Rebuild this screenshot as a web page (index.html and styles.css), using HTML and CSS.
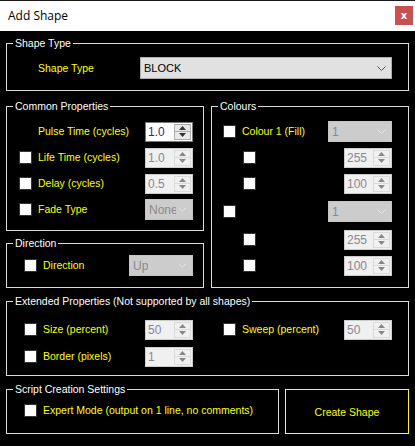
FILE: index.html
```html
<!DOCTYPE html>
<html>
<head>
<meta charset="utf-8">
<title>Add Shape</title>
<link rel="stylesheet" href="styles.css">
</head>
<body>
<div class="window">
  <div class="titlebar">
    <span class="title">Add Shape</span>
    <span class="close">x</span>
  </div>
  <div class="content">
    <section class="group g-shape">
      <span class="legend">Shape Type</span>
      <div class="shape-row">
        <span class="label">Shape Type</span>
        <div class="combo enabled wide"><span class="ctext">BLOCK</span><svg class="chev" width="9" height="5" viewBox="0 0 9 5"><path d="M0.5 0.5 L4.5 4.5 L8.5 0.5" fill="none" stroke="#555" stroke-width="1"/></svg></div>
      </div>
    </section>

    <div class="columns">
      <div class="col-left">
        <section class="group g-common">
          <span class="legend">Common Properties</span>
          <div class="rows">
            <div class="row r-common">
              <span></span><span></span><span></span>
              <span class="label">Pulse Time (cycles)</span>
              <div class="num enabled"><span class="ntext">1.0</span><span class="spin"><span class="up"><svg width="7" height="4" viewBox="0 0 7 4"><path d="M3.5 0 L7 4 L0 4 Z" fill="#333"/></svg></span><span class="down"><svg width="7" height="4" viewBox="0 0 7 4"><path d="M0 0 L7 0 L3.5 4 Z" fill="#333"/></svg></span></span></div>
            </div>
            <div class="row r-common">
              <span></span><span class="cb"></span><span></span>
              <span class="label">Life Time (cycles)</span>
              <div class="num"><span class="ntext">1.0</span><span class="spin"><span class="up"><svg width="7" height="4" viewBox="0 0 7 4"><path d="M3.5 0 L7 4 L0 4 Z" fill="#888"/></svg></span><span class="down"><svg width="7" height="4" viewBox="0 0 7 4"><path d="M0 0 L7 0 L3.5 4 Z" fill="#888"/></svg></span></span></div>
            </div>
            <div class="row r-common">
              <span></span><span class="cb"></span><span></span>
              <span class="label">Delay (cycles)</span>
              <div class="num"><span class="ntext">0.5</span><span class="spin"><span class="up"><svg width="7" height="4" viewBox="0 0 7 4"><path d="M3.5 0 L7 4 L0 4 Z" fill="#888"/></svg></span><span class="down"><svg width="7" height="4" viewBox="0 0 7 4"><path d="M0 0 L7 0 L3.5 4 Z" fill="#888"/></svg></span></span></div>
            </div>
            <div class="row r-common">
              <span></span><span class="cb"></span><span></span>
              <span class="label">Fade Type</span>
              <div class="combo"><span class="ctext">None</span><svg class="chev" width="9" height="5" viewBox="0 0 9 5"><path d="M0.5 0.5 L4.5 4.5 L8.5 0.5" fill="none" stroke="#e8e8e8" stroke-width="1"/></svg></div>
            </div>
          </div>
        </section>

        <section class="group g-dir">
          <span class="legend">Direction</span>
          <div class="rows">
            <div class="row r-dir">
              <span></span><span class="cb"></span><span></span>
              <span class="label">Direction</span>
              <div class="combo"><span class="ctext">Up</span><svg class="chev" width="9" height="5" viewBox="0 0 9 5"><path d="M0.5 0.5 L4.5 4.5 L8.5 0.5" fill="none" stroke="#e8e8e8" stroke-width="1"/></svg></div>
            </div>
          </div>
        </section>
      </div>

      <section class="group g-colours">
        <span class="legend">Colours</span>
        <div class="rows rows-col">
          <div class="row r-col">
            <span class="cb c-cb"></span>
            <span class="label c-label">Colour 1 (Fill)</span>
            <div class="combo c-combo"><span class="ctext">1</span><svg class="chev" width="9" height="5" viewBox="0 0 9 5"><path d="M0.5 0.5 L4.5 4.5 L8.5 0.5" fill="none" stroke="#e8e8e8" stroke-width="1"/></svg></div>
          </div>
          <div class="row r-col">
            <span class="cb c-sub"></span>
            <div class="num c-num"><span class="ntext">255</span><span class="spin"><span class="up"><svg width="7" height="4" viewBox="0 0 7 4"><path d="M3.5 0 L7 4 L0 4 Z" fill="#888"/></svg></span><span class="down"><svg width="7" height="4" viewBox="0 0 7 4"><path d="M0 0 L7 0 L3.5 4 Z" fill="#888"/></svg></span></span></div>
          </div>
          <div class="row r-col">
            <span class="cb c-sub"></span>
            <div class="num c-num"><span class="ntext">100</span><span class="spin"><span class="up"><svg width="7" height="4" viewBox="0 0 7 4"><path d="M3.5 0 L7 4 L0 4 Z" fill="#888"/></svg></span><span class="down"><svg width="7" height="4" viewBox="0 0 7 4"><path d="M0 0 L7 0 L3.5 4 Z" fill="#888"/></svg></span></span></div>
          </div>
          <div class="row r-col r-gap">
            <span class="cb c-cb"></span>
            <div class="combo c-combo"><span class="ctext">1</span><svg class="chev" width="9" height="5" viewBox="0 0 9 5"><path d="M0.5 0.5 L4.5 4.5 L8.5 0.5" fill="none" stroke="#e8e8e8" stroke-width="1"/></svg></div>
          </div>
          <div class="row r-col r-gap">
            <span class="cb c-sub"></span>
            <div class="num c-num"><span class="ntext">255</span><span class="spin"><span class="up"><svg width="7" height="4" viewBox="0 0 7 4"><path d="M3.5 0 L7 4 L0 4 Z" fill="#888"/></svg></span><span class="down"><svg width="7" height="4" viewBox="0 0 7 4"><path d="M0 0 L7 0 L3.5 4 Z" fill="#888"/></svg></span></span></div>
          </div>
          <div class="row r-col">
            <span class="cb c-sub"></span>
            <div class="num c-num"><span class="ntext">100</span><span class="spin"><span class="up"><svg width="7" height="4" viewBox="0 0 7 4"><path d="M3.5 0 L7 4 L0 4 Z" fill="#888"/></svg></span><span class="down"><svg width="7" height="4" viewBox="0 0 7 4"><path d="M0 0 L7 0 L3.5 4 Z" fill="#888"/></svg></span></span></div>
          </div>
        </div>
      </section>
    </div>

    <section class="group g-ext">
      <span class="legend">Extended Properties (Not supported by all shapes)</span>
      <div class="rows rows-ext">
        <div class="row r-ext">
          <span></span><span class="cb"></span><span></span>
          <span class="label">Size (percent)</span>
          <div class="num"><span class="ntext">50</span><span class="spin"><span class="up"><svg width="7" height="4" viewBox="0 0 7 4"><path d="M3.5 0 L7 4 L0 4 Z" fill="#888"/></svg></span><span class="down"><svg width="7" height="4" viewBox="0 0 7 4"><path d="M0 0 L7 0 L3.5 4 Z" fill="#888"/></svg></span></span></div>
          <span></span><span class="cb"></span><span></span>
          <span class="label">Sweep (percent)</span>
          <div class="num"><span class="ntext">50</span><span class="spin"><span class="up"><svg width="7" height="4" viewBox="0 0 7 4"><path d="M3.5 0 L7 4 L0 4 Z" fill="#888"/></svg></span><span class="down"><svg width="7" height="4" viewBox="0 0 7 4"><path d="M0 0 L7 0 L3.5 4 Z" fill="#888"/></svg></span></span></div>
        </div>
        <div class="row r-ext">
          <span></span><span class="cb"></span><span></span>
          <span class="label">Border (pixels)</span>
          <div class="num"><span class="ntext">1</span><span class="spin"><span class="up"><svg width="7" height="4" viewBox="0 0 7 4"><path d="M3.5 0 L7 4 L0 4 Z" fill="#888"/></svg></span><span class="down"><svg width="7" height="4" viewBox="0 0 7 4"><path d="M0 0 L7 0 L3.5 4 Z" fill="#888"/></svg></span></span></div>
        </div>
      </div>
    </section>

    <div class="bottom">
      <section class="group g-script">
        <span class="legend">Script Creation Settings</span>
        <div class="rows rows-script">
          <div class="row r-script">
            <span></span><span class="cb"></span><span></span>
            <span class="label">Expert Mode (output on 1 line, no comments)</span>
          </div>
        </div>
      </section>
      <div class="create">Create Shape</div>
    </div>
  </div>
</div>
</body>
</html>
```

FILE: styles.css
```css
* { box-sizing: border-box; }

html, body {
  margin: 0;
  padding: 0;
  background: #000;
}

body {
  width: 415px;
  height: 446px;
  overflow: hidden;
  font-family: "Liberation Sans", Arial, sans-serif;
  font-size: 10.5px;
}

.window {
  width: 415px;
  height: 446px;
  background: #000;
}

.titlebar {
  height: 31px;
  border-top: 1px solid #1a1a1a;
  background: #fff;
  display: flex;
  align-items: center;
  justify-content: space-between;
  padding: 0 2px 0 8px;
}

.title {
  font-family: "Open Sans", "Noto Sans", sans-serif;
  font-size: 12px;
  color: #000;
  margin-top: -1px;
}

.close {
  width: 18px;
  height: 19px;
  background: #c75050;
  color: #fff;
  font-family: "DejaVu Sans", sans-serif;
  font-weight: bold;
  font-size: 10px;
  display: flex;
  align-items: center;
  justify-content: center;
  margin-top: -2px;
}

.content {
  padding: 0 6px;
}

.group {
  position: relative;
  border: 1px solid #dcdcdc;
}

.legend {
  position: absolute;
  top: -7px;
  left: 6px;
  padding: 0 2px;
  background: #000;
  color: #fff;
  line-height: 13px;
  white-space: nowrap;
}

.label {
  color: #ffff00;
  white-space: nowrap;
  line-height: 13px;
}

/* Shape type */
.g-shape {
  margin-top: 12px;
  height: 48px;
}

.shape-row {
  display: flex;
  align-items: center;
  padding: 13px 0 0 31px;
}

.shape-row .label {
  width: 102px;
}

/* layout columns */
.columns {
  display: flex;
  gap: 7px;
  margin-top: 15px;
}

.col-left {
  width: 198px;
  display: flex;
  flex-direction: column;
  gap: 12px;
}

.g-common { height: 125px; }
.g-dir { height: 45px; }
.g-colours { width: 198px; height: 182px; }

.g-ext {
  margin-top: 13px;
  height: 75px;
}

.bottom {
  display: flex;
  gap: 6px;
  margin-top: 13px;
}

.g-script {
  width: 273px;
  height: 45px;
}

.create {
  width: 124px;
  height: 45px;
  border: 1px solid #ffff00;
  color: #ffff00;
  display: flex;
  align-items: center;
  justify-content: center;
}

/* rows */
.rows {
  display: flex;
  flex-direction: column;
  gap: 5px;
  padding-top: 14px;
}

.row {
  display: grid;
  height: 21px;
  align-items: center;
}

.r-common { grid-template-columns: 12px 13px 6px 107px 48px; }
.r-dir { grid-template-columns: 17px 13px 6px 86px 64px; }
.g-dir .rows { padding-top: 11px; }

.rows-col { gap: 5px; }
.r-col { grid-template-columns: 11px 13px 6px 86px 16px 48px; }
.r-gap { margin-top: 2px; }
.c-cb { grid-column: 2; }
.c-label { grid-column: 4; }
.c-combo { grid-column: 5 / span 2; }
.c-sub { grid-column: 4; margin-left: 1px; }
.c-num { grid-column: 6; }

.rows-ext { padding-top: 17px; gap: 6px; }
.r-ext { grid-template-columns: 17px 13px 6px 102px 48px 30px 13px 6px 102px 48px; }

.rows-script { padding-top: 10px; }
.r-script { grid-template-columns: 17px 13px 6px auto; }

/* controls */
.cb {
  width: 13px;
  height: 13px;
  background: #fff;
  border: 1px solid #333;
}

.combo {
  height: 21px;
  background: #cccccc;
  border: 1px solid #c4c4c4;
  display: flex;
  align-items: center;
  justify-content: space-between;
  padding: 0 5px 0 3px;
  color: #8a8a8a;
  overflow: hidden;
}

.combo .ctext {
  white-space: nowrap;
  overflow: hidden;
  font-size: 12px;
}

.combo.enabled {
  background: #e1e1e1;
  border-color: #adadad;
  color: #000;
}

.combo.enabled .ctext { font-size: 11px; }

.combo.wide {
  width: 252px;
  height: 22px;
}

.chev { flex: none; margin-left: 2px; }

.num {
  height: 20px;
  width: 48px;
  background: #f0f0f0;
  border: 1px solid #cccccc;
  display: flex;
  align-items: stretch;
  color: #8e8494;
}

.num.enabled {
  background: #fff;
  border-color: #7a7a7a;
  color: #5a1070;
}

.ntext {
  flex: 1;
  display: flex;
  align-items: center;
  padding-left: 2px;
  font-size: 12px;
}

.spin {
  width: 17px;
  display: flex;
  flex-direction: column;
  margin: 1px 1px 1px 0;
  border: 1px solid #dadada;
  background: #f0f0f0;
}

.num.enabled .spin {
  border-color: #adadad;
  background: #e9e9e9;
}

.spin .up, .spin .down {
  flex: 1;
  display: flex;
  align-items: center;
  justify-content: center;
}

.spin .up { border-bottom: 1px solid #dadada; }
.num.enabled .spin .up { border-bottom-color: #adadad; }
```
